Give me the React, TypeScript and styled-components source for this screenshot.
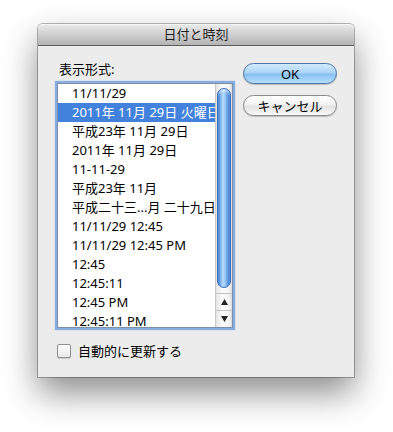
import styled, { createGlobalStyle } from "styled-components";

const GlobalStyle = createGlobalStyle`
  html, body {
    margin: 0;
    padding: 0;
    background: #ffffff;
  }
  body {
    font-family: "Noto Sans", "Noto Sans CJK JP", sans-serif;
    font-size: 13px;
    color: #000;
  }
`;

const Page = styled.div`
  width: 393px;
  height: 432px;
  padding: 24px 0 0 38px;
  box-sizing: border-box;
  overflow: hidden;
`;

const Window = styled.div`
  width: 316px;
  height: 353px;
  display: flex;
  flex-direction: column;
  background: #ececec;
  border-radius: 5px 5px 0 0;
  box-shadow: 0 16px 34px rgba(0, 0, 0, 0.45), 0 0 0 1px rgba(0, 0, 0, 0.28);
`;

const TitleBar = styled.div`
  height: 21px;
  flex: none;
  display: flex;
  align-items: center;
  justify-content: center;
  border-radius: 5px 5px 0 0;
  background: linear-gradient(#ebebeb 0%, #d2d2d2 45%, #b4b4b4 100%);
  border-bottom: 1px solid #5c5c5c;
  box-shadow: inset 0 1px 0 #f6f6f6;
  font-size: 13px;
  color: #1e1e1e;
  line-height: 21px;
`;

const Body = styled.div`
  flex: 1;
  display: flex;
  flex-direction: column;
  padding: 15px 0 0 19px;
`;

const Main = styled.div`
  display: flex;
  gap: 10px;
`;

const LeftColumn = styled.div`
  display: flex;
  flex-direction: column;
  width: 176px;
`;

const Label = styled.div`
  height: 16px;
  line-height: 16px;
  margin: 0 0 6px 2px;
`;

const ListBox = styled.div`
  height: 243px;
  display: flex;
  border: 1px solid #7c8ea8;
  background: #fff;
  box-shadow: 0 0 1px 2px rgba(104, 152, 222, 0.75);
  overflow: hidden;
`;

const Rows = styled.div`
  flex: 1;
  overflow: hidden;
`;

const Row = styled.div<{ $selected?: boolean }>`
  height: 19px;
  line-height: 19px;
  padding-left: 14px;
  white-space: nowrap;
  overflow: hidden;
  background: ${(p) => (p.$selected ? "#4282dc" : "transparent")};
  color: ${(p) => (p.$selected ? "#fff" : "#000")};
`;

const ScrollBar = styled.div`
  width: 16px;
  flex: none;
  display: flex;
  flex-direction: column;
  border-left: 1px solid #c9c9c9;
  background: linear-gradient(to right, #e4e4e4, #fbfbfb 40%, #f4f4f4 80%, #dcdcdc);
`;

const Track = styled.div`
  flex: 1;
  display: flex;
  padding: 4px 1px 5px 1px;
`;

const Thumb = styled.div`
  flex: 1;
  border-radius: 7px;
  border: 1px solid #3a6cb8;
  background: linear-gradient(
    to right,
    #2e69c6 0%,
    #7db4f0 22%,
    #b9dcfd 42%,
    #9ccbf8 58%,
    #5c98e4 82%,
    #3470cc 100%
  );
  box-shadow: inset 0 2px 2px rgba(255, 255, 255, 0.6);
`;

const ArrowButton = styled.div`
  height: 16px;
  display: flex;
  align-items: center;
  justify-content: center;
  border-top: 1px solid #c4c4c4;
`;

const RightColumn = styled.div`
  display: flex;
  flex-direction: column;
  gap: 11px;
  padding-top: 2px;
`;

const Button = styled.div<{ $default?: boolean }>`
  width: 94px;
  height: 21px;
  box-sizing: border-box;
  border-radius: 11px;
  display: flex;
  align-items: center;
  justify-content: center;
  font-size: 13px;
  border: 1px solid ${(p) => (p.$default ? "#4f75a8" : "#8a8a8a")};
  background: ${(p) =>
    p.$default
      ? "linear-gradient(#d3eafc 0%, #a9d3f7 48%, #86c0f1 52%, #b7defc 100%)"
      : "linear-gradient(#ffffff 0%, #f1f1f1 48%, #e2e2e2 52%, #f9f9f9 100%)"};
  box-shadow: 0 1px 1px rgba(0, 0, 0, 0.2);
`;

const CheckRow = styled.div`
  display: flex;
  align-items: center;
  gap: 7px;
  margin-top: 15px;
  line-height: 16px;
`;

const CheckBox = styled.div`
  width: 12px;
  height: 12px;
  border: 1px solid #8e8e8e;
  border-radius: 2px;
  background: linear-gradient(#fdfdfd, #e9e9e9);
  box-shadow: 0 1px 1px rgba(0, 0, 0, 0.15);
`;

const formats = [
  "11/11/29",
  "2011年 11月 29日 火曜日",
  "平成23年 11月 29日",
  "2011年 11月 29日",
  "11-11-29",
  "平成23年 11月",
  "平成二十三...月 二十九日",
  "11/11/29 12:45",
  "11/11/29 12:45 PM",
  "12:45",
  "12:45:11",
  "12:45 PM",
  "12:45:11 PM",
];

const Arrow = ({ up }: { up?: boolean }) => (
  <svg width="7" height="6" viewBox="0 0 7 6">
    <polygon points={up ? "3.5,0 7,6 0,6" : "0,0 7,0 3.5,6"} fill="#222" />
  </svg>
);

export default function App() {
  return (
    <Page>
      <GlobalStyle />
      <Window>
        <TitleBar>日付と時刻</TitleBar>
        <Body>
          <Main>
            <LeftColumn>
              <Label>表示形式:</Label>
              <ListBox>
                <Rows>
                  {formats.map((f, i) => (
                    <Row key={i} $selected={i === 1}>
                      {f}
                    </Row>
                  ))}
                </Rows>
                <ScrollBar>
                  <Track>
                    <Thumb />
                  </Track>
                  <ArrowButton>
                    <Arrow up />
                  </ArrowButton>
                  <ArrowButton>
                    <Arrow />
                  </ArrowButton>
                </ScrollBar>
              </ListBox>
            </LeftColumn>
            <RightColumn>
              <Button $default>OK</Button>
              <Button>キャンセル</Button>
            </RightColumn>
          </Main>
          <CheckRow>
            <CheckBox />
            <span>自動的に更新する</span>
          </CheckRow>
        </Body>
      </Window>
    </Page>
  );
}
